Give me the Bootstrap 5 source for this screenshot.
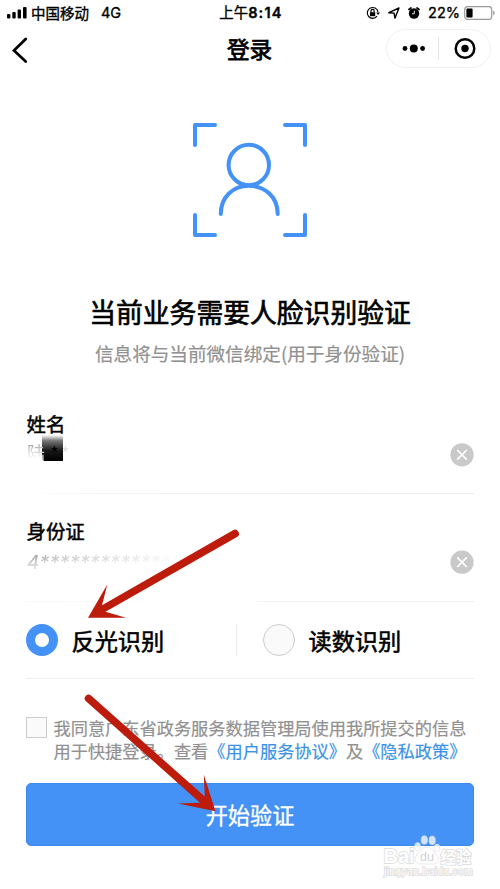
<!DOCTYPE html>
<html lang="zh-CN">
<head>
<meta charset="utf-8">
<meta name="viewport" content="width=device-width, initial-scale=1">
<title>登录</title>
<link href="https://cdn.jsdelivr.net/npm/bootstrap@5.3.0/dist/css/bootstrap.min.css" rel="stylesheet">
<style>
body{font-family:"Noto Sans CJK SC",sans-serif;color:#000;background:#fff;overflow:hidden}
.screen{width:500px;height:889px;overflow:hidden}
.medium{-webkit-text-stroke:.35px currentColor}
.status{height:25px;font-size:14.5px;line-height:25px;padding-left:7px;padding-right:5px}
.latin{font-family:Inter,"Noto Sans CJK SC",sans-serif}
.status-side{width:212px}
.clock{font-size:14.4px}
.clock b{font-weight:600;font-size:14.5px;letter-spacing:1.2px}
.titlebar{height:46px;padding:0 9px 0 11px}
.titlebar h1{font-size:22.6px;line-height:40px;font-weight:400;-webkit-text-stroke:.75px #000;margin-left:-3px;padding-top:2px}
.bar-side{width:105px;padding-top:1px}
.capsule{width:105px;height:39px;border:1px solid #f1f1f1;border-radius:20px}
.capsule-line{width:1px;height:23px;background:#e5e5e5}
.face-art{height:219px;padding-top:48px}
.lead-title{font-size:26.8px;line-height:42px;padding-top:1px;font-weight:400;-webkit-text-stroke:.65px #000}
.lead-note{font-size:18.6px;line-height:30px;margin-top:5px;color:#919191;-webkit-text-stroke:.2px #919191}
.form-area{padding:0 26px 0 26px;margin-top:42px}
.field{height:108px;border-bottom:1px solid transparent;padding-top:14px}
.field-label{font-size:19.4px;line-height:28px;height:28px;font-weight:400;-webkit-text-stroke:.5px #000;padding-left:.5px}
.field-name{height:84px;padding-top:0;border-image:linear-gradient(90deg,#fff,#f2f2f2 18%,#ededed) 1}
.field-id{padding-top:23px;border-image:linear-gradient(90deg,#f8f8f8 0,#fdfdfd 30%,#fff 50%,#eee 54%) 1}
.field-value{height:32px;font-size:18px;line-height:28px;padding-left:1px}
.faded{color:transparent;background:linear-gradient(#999 15%,#fff 75%);-webkit-background-clip:text;background-clip:text}
.faded-id{font-size:19px;margin-top:4px;color:transparent;background:linear-gradient(#fff0 15%,#fff 78%),linear-gradient(90deg,#888 0,#bbb 36px,#ddd 100px,#fff 152px);-webkit-background-clip:text;background-clip:text;letter-spacing:.6px}
.mask{left:15px;top:-3px;width:21px;height:26px;background:linear-gradient(#fff,#777 22%,#181818 60%,#000)}
.name-text{line-height:28px}
.star{width:11px;text-align:center}
.options{height:77px;border-bottom:1px solid #eee}
.option-text{font-size:23.2px;line-height:34px;padding-bottom:1px;margin-left:13.5px;font-weight:400;-webkit-text-stroke:.55px #000}
.option-first{width:210px}
.option-second{padding-left:26px}
.radio-on{width:32px;height:32px;border:9px solid #4492f5;background:#fff}
.radio-off{width:32px;height:32px;border:1px solid #cdcdcd;background:#fafafa}
.divider{width:1px;height:32px;background:#ececec}
.agree{padding-top:38px;height:104px;color:#919191;font-size:17.22px;line-height:23px;-webkit-text-stroke:.2px currentColor}
.agree-box{width:21px;height:21px;border:1px solid #ccc;background:#fafafa}
.agree-text{margin-left:6.5px;margin-top:-1px}
.agree-link{color:#3c93e6;text-decoration:none}
.btn-verify{height:63px;border:1px solid #3a8af0;border-radius:5px;background:#4492f5;color:#fff;font-size:22.2px;line-height:61px}
.btn-verify:hover{background:#4492f5;color:#fff}
.watermark{right:23px;bottom:0;width:100px;height:60px}
.arrows{left:0;top:0;pointer-events:none}
</style>
<script src="https://cdn.jsdelivr.net/npm/bootstrap@5.3.0/dist/js/bootstrap.bundle.min.js"></script>
</head>
<body>
<div class="screen position-relative d-flex flex-column">
  <header>
    <div class="status d-flex align-items-center justify-content-between">
      <div class="status-side d-flex align-items-center medium">
        <svg width="20" height="13" viewBox="0 0 20 13"><rect x="0" y="8" width="3.4" height="4.5" rx="1"/><rect x="5.3" y="6" width="3.4" height="6.5" rx="1"/><rect x="10.6" y="3.6" width="3.4" height="8.9" rx="1"/><rect x="16" y="1" width="3.6" height="11.5" rx="1"/></svg>
        <span class="ms-1">中国移动</span><span class="latin ms-2 ps-1">4G</span>
      </div>
      <div class="clock latin text-nowrap medium">上午<b>8:14</b></div>
      <div class="status-side d-flex align-items-center justify-content-end">
        <svg width="14" height="14" viewBox="0 0 14 14" fill="none" stroke="#000" stroke-width="1.2"><path d="M11 10.200A5.400 5.400 0 1 1 12 5.800"/><path d="M10.200 6.500H14l-1.900 2.400z" fill="#000" stroke="none"/><rect x="4" y="6.200" width="5.200" height="4" fill="#000" stroke="none"/><path d="M5 6.500V5a1.600 1.600 0 0 1 3.200 0v1.500"/></svg>
        <svg class="ms-2" width="12" height="12" viewBox="0 0 12 12" fill="none" stroke="#000" stroke-width="1.4" stroke-linejoin="round"><path d="M.8 5.700 11 1 6.900 11.200 6.100 6.100Z"/></svg>
        <svg class="ms-2" width="12" height="14" viewBox="0 0 12 14"><circle cx="6" cy="7.500" r="5.200"/><path d="M1 3.500 3 2M9 2 11 3.500" stroke="#000" stroke-width="1.700" stroke-linecap="round"/><path d="M6.300 4.700v3.100H4" fill="none" stroke="#fff" stroke-width=".9"/></svg>
        <span class="latin ms-2 medium">22%</span>
        <svg class="ms-1" width="31" height="14" viewBox="0 0 31 14"><rect x=".7" y=".7" width="27" height="12.6" rx="2.8" fill="none" stroke="#999" stroke-width="1.2"/><rect x="2.4" y="2.4" width="6.2" height="9.2" rx="1"/><path d="M29.2 4.8v4.4c2-.5 2-3.9 0-4.4" fill="#999"/></svg>
      </div>
    </div>
    <nav class="titlebar d-flex justify-content-between align-items-center">
      <div class="bar-side"><svg class="d-block" width="18" height="28" viewBox="0 0 18 28" fill="none" stroke="#000" stroke-width="2.7" stroke-linecap="round"><path d="M14.7 4 3 15.5 14.7 26.5"/></svg></div>
      <h1 class="mt-0 mb-0">登录</h1>
      <div class="capsule d-flex align-items-center">
        <svg width="51" height="37" viewBox="0 0 51 37"><circle cx="18" cy="18.5" r="2.4"/><circle cx="26.8" cy="18.5" r="4"/><circle cx="35.6" cy="18.5" r="2.4"/></svg>
        <div class="capsule-line"></div>
        <svg width="51" height="37" viewBox="0 0 51 37"><circle cx="26" cy="18.5" r="9.3" fill="none" stroke="#000" stroke-width="2.5"/><circle cx="26" cy="18.5" r="3.7"/></svg>
      </div>
    </nav>
  </header>
  <main>
    <section class="text-center">
      <div class="face-art d-flex justify-content-center align-items-start"><svg width="120" height="124" viewBox="190 119 120 124" fill="none" stroke="#4492f5" stroke-width="4" stroke-linecap="round" stroke-linejoin="round"><path d="M195 145V125H215M285 125H305V145M195 215V235H215M285 235H305V215"/><circle cx="248.8" cy="165" r="20.2"/><path d="M220.8 214C220.8 197 233 185.8 249 185.8S277.7 197 277.7 214"/></svg></div>
      <h2 class="lead-title m-0">当前业务需要人脸识别验证</h2>
      <p class="lead-note mb-0">信息将与当前微信绑定(用于身份验证)</p>
    </section>
    <section class="form-area">
      <div class="field field-name">
        <div class="field-label">姓名</div>
        <div class="field-value d-flex justify-content-between align-items-start">
          <div class="position-relative"><div class="mask position-absolute"></div><div class="name-text position-relative d-flex"><span class="faded">陆</span><span class="star ms-1">*</span><span class="star text-black-50 opacity-25">*</span></div></div>
          <svg width="24" height="32" viewBox="0 0 24 32"><circle cx="12" cy="16.800" r="11.6" fill="#c9c9c9"/><path d="m7.2 12 9.6 9.6m0-9.6-9.6 9.6" stroke="#fff" stroke-width="1.7"/></svg>
        </div>
      </div>
      <div class="field field-id">
        <div class="field-label">身份证</div>
        <div class="field-value d-flex justify-content-between align-items-start">
          <span class="faded-id latin fst-italic">4**************</span>
          <svg width="24" height="32" viewBox="0 0 24 32"><circle cx="12" cy="17.2" r="11.6" fill="#c9c9c9"/><path d="m7.2 12.4 9.6 9.6m0-9.6-9.6 9.6" stroke="#fff" stroke-width="1.7"/></svg>
        </div>
      </div>
      <div class="options d-flex align-items-center">
        <div class="option-first d-flex align-items-center"><span class="radio-on rounded-circle"></span><span class="option-text">反光识别</span></div>
        <div class="divider"></div>
        <div class="option-second d-flex align-items-center"><span class="radio-off rounded-circle"></span><span class="option-text">读数识别</span></div>
      </div>
      <div class="agree d-flex align-items-start">
        <span class="agree-box flex-shrink-0"></span>
        <div class="agree-text text-nowrap">我同意广东省政务服务数据管理局使用我所提交的信息<br>用于快捷登录。查看<a class="agree-link" href="#">《用户服务协议》</a>及<a class="agree-link" href="#">《隐私政策》</a></div>
      </div>
      <button class="btn btn-verify w-100 p-0 medium" type="button">开始验证</button>
    </section>
  </main>
  <svg class="arrows position-absolute" width="500" height="889" viewBox="0 0 500 889" fill="#bd1b0c">
    <path d="M233 530.300A3.700 3.700 0 0 1 237 537L105.500 611.700 126 617.800 88 617.800 107.300 584.500 102 605.300Z"/>
    <path d="M91 695.600A3.700 3.700 0 0 0 86 701.200L200 802.700 178 803.500 215.500 811.300 203.800 774.700 204.800 796.500Z"/>
  </svg>
  <svg class="watermark position-absolute" viewBox="377 829 100 60" font-family="Liberation Sans, sans-serif">
    <g fill="#fff" stroke="#dadada" stroke-width="1.4" paint-order="stroke"><text x="383.500" y="863" font-size="20" font-weight="700" textLength="31">Bai</text><text x="440.500" y="862.500" font-size="15.500" font-weight="700" font-family="Noto Sans CJK SC" textLength="31">经验</text><text x="384" y="875" font-size="10.500" textLength="89">jingyan.baidu.com</text></g>
    <g fill="#fff" fill-opacity=".75" stroke="#dcdcdc" stroke-width=".6"><ellipse cx="424.3" cy="840" rx="3.2" ry="4.3"/><ellipse cx="432.2" cy="840.4" rx="3.2" ry="4.3"/><ellipse cx="417.6" cy="846.5" rx="3" ry="3.9"/><ellipse cx="437" cy="848" rx="3" ry="3.9"/><path d="M427 847c5 0 6 5 9.500 8s3 9-3 9H420c-6 0-6-6-3-9s5-8 10-8Z"/></g>
    <text x="420" y="861" font-size="12.500" fill="#d2d2d2">du</text>
  </svg>
</div>
</body>
</html>
